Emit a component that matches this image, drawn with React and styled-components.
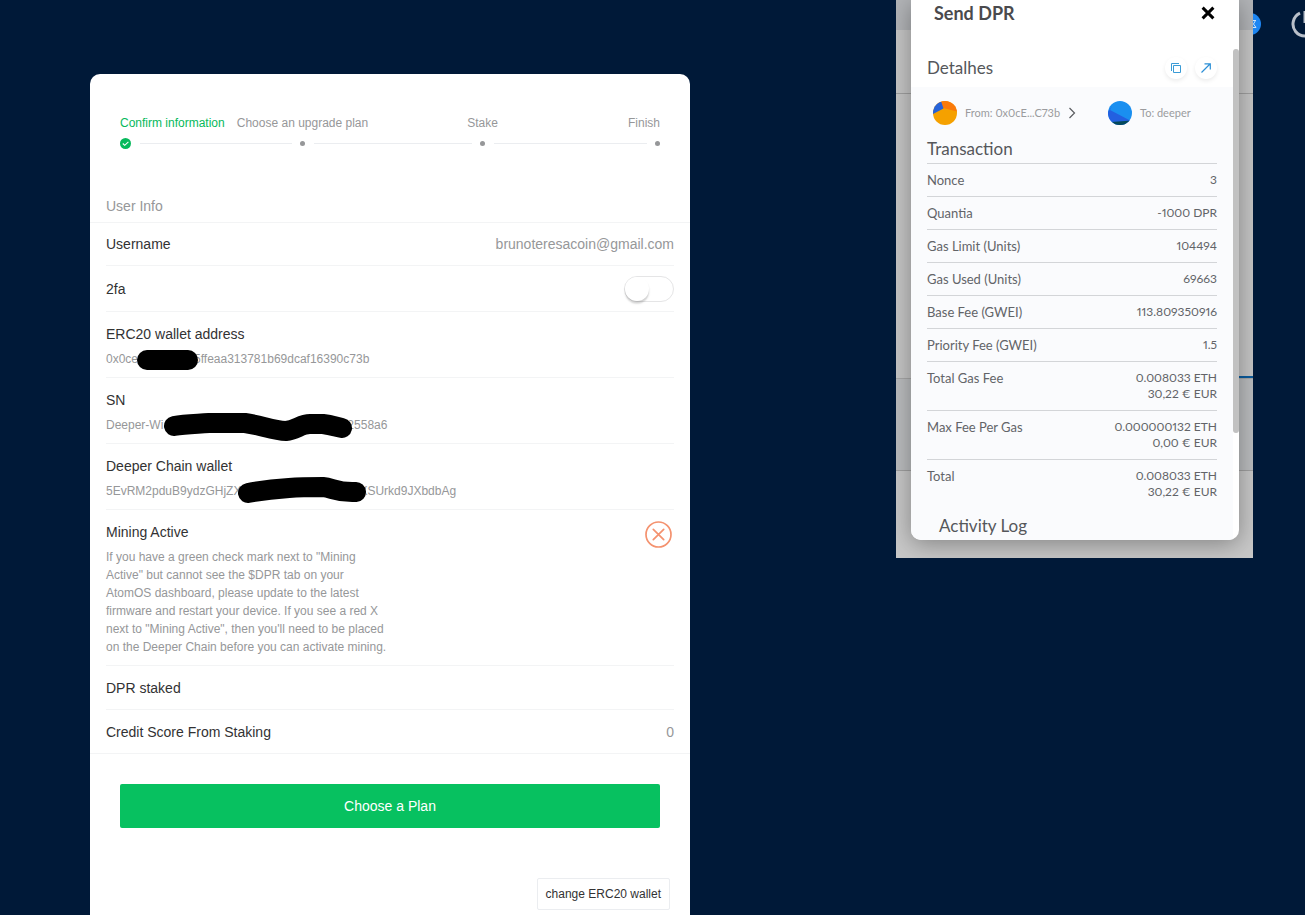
import React from "react";
import styled, { createGlobalStyle } from "styled-components";

const GlobalStyle = createGlobalStyle`
  *, *::before, *::after { box-sizing: border-box; }
  body {
    margin: 0;
    background: #001938;
    color: #323233;
    font-family: "Liberation Sans", Arial, sans-serif;
    font-size: 14px;
    line-height: 24px;
  }
  h2, h3, p, ol { margin: 0; padding: 0; font-weight: 400; }
  button { font-family: inherit; cursor: pointer; }
`;

const Page = styled.div`
  display: flex;
  min-height: 100vh;
  padding-left: 90px;
  overflow: hidden;
`;

const Card = styled.main`
  flex: 0 1 600px;
  margin-top: 74px;
  padding-bottom: 5px;
  background: #fff;
  border-radius: 10px 10px 0 0;
`;

const Steps = styled.ol`
  display: flex;
  padding: 40px 30px 32px;
  list-style: none;
  font-size: 12px;
  line-height: 18px;
`;

const Step = styled.li`
  flex: 1 1 0;
  color: ${(p) => (p.$done ? "#07b95c" : "#969799")};
  &:last-child {
    flex: 0 0 5px;
    margin-left: -5px;
  }
`;

const StepLabel = styled.div`
  display: flex;
  width: 5px;
  justify-content: ${(p) => p.$place};
  white-space: nowrap;
`;

const StepTrack = styled.div`
  display: flex;
  align-items: center;
  height: 13px;
  margin-top: 5px;
`;

const Dot = styled.span`
  flex: none;
  width: 5px;
  height: 5px;
  border-radius: 50%;
  background: #969799;
`;

const Line = styled.span`
  flex: 1;
  height: 1px;
  margin: 0 8px 0 9px;
  background: #ebedf0;
  ${Step}:nth-last-child(2) & { margin-right: 13px; }
`;

const GroupTitle = styled.h2`
  padding: 16px 16px 8px;
  color: #969799;
  font-size: 14px;
  line-height: 16px;
`;

const Group = styled.div`
  padding: 0 16px;
  box-shadow: inset 0 1px #f3f4f5, inset 0 -1px #f3f4f5;
`;

const Cell = styled.div`
  display: flex;
  justify-content: space-between;
  align-items: ${(p) => (p.$middle ? "center" : "flex-start")};
  padding: 10px 0;
  box-shadow: inset 0 -1px #f3f4f5;
`;

const CellValue = styled.span`
  color: #969799;
`;

const CellNote = styled.p`
  max-width: 284px;
  margin-top: 4px;
  color: #969799;
  font-size: 12px;
  line-height: 18px;
  white-space: ${(p) => (p.$wrap ? "normal" : "nowrap")};
`;

const Switch = styled.input`
  appearance: none;
  flex: none;
  width: 50px;
  height: 26px;
  margin: 0;
  border: 1px solid #e5e5e6;
  border-radius: 13px;
  background: #fff;
  cursor: pointer;
  &::before {
    content: "";
    display: block;
    width: 24px;
    height: 24px;
    border-radius: 50%;
    background: #fff;
    box-shadow: 0 3px 1px rgba(0, 0, 0, 0.05), 0 2px 2px rgba(0, 0, 0, 0.1), 0 3px 3px rgba(0, 0, 0, 0.05);
  }
  &:checked { background: #07c160; }
  &:checked::before { margin-left: 24px; }
`;

const Redacted = styled.span`
  display: inline-block;
  position: relative;
  width: ${(p) => p.$width}px;
  height: 12px;
  svg {
    position: absolute;
    left: 0;
    top: 0;
    overflow: visible;
    fill: none;
    stroke: #000;
    stroke-width: 20;
    stroke-linecap: round;
    stroke-linejoin: round;
  }
`;

const CloseMark = styled.svg`
  flex: none;
  margin: 1px 2px;
`;

const PrimaryButton = styled.button`
  display: block;
  width: calc(100% - 60px);
  height: 44px;
  margin: 30px 30px 50px;
  border: 0;
  border-radius: 2px;
  background: #07c160;
  color: #fff;
  font-size: 14px;
`;

const SmallButton = styled.button`
  display: block;
  height: 32px;
  margin: 0 20px 0 auto;
  padding: 0 8px;
  border: 1px solid #ebedf0;
  border-radius: 2px;
  background: #fff;
  color: #323233;
  font-size: 12px;
`;

const Wallet = styled.aside`
  position: relative;
  z-index: 1;
  flex: none;
  align-self: flex-start;
  display: grid;
  width: 357px;
  margin-left: auto;
  overflow: hidden;
  font-family: Lato, sans-serif;
  font-variant-numeric: proportional-nums;
  color: #626468;
`;

const Backdrop = styled.div`
  grid-area: 1 / 1;
  display: grid;
  grid-template-rows: 30px 64px 285px 92px 1fr;
`;

const Band = styled.div`
  background: ${(p) => p.$fill};
  border-bottom: ${(p) => (p.$rule ? `1px solid ${p.$rule}` : "0")};
`;

const ActiveTab = styled(Band)`
  display: flex;
  justify-content: flex-end;
  align-items: flex-end;
  &::after {
    content: "";
    width: 130px;
    height: 2px;
    background: #0b5c9e;
  }
`;

const Dialog = styled.section`
  grid-area: 1 / 1;
  z-index: 1;
  height: 540px;
  margin: 0 14px 18px 15px;
  overflow: hidden;
  border-radius: 0 0 10px 10px;
  background: #fff;
  box-shadow: 0 4px 24px rgba(0, 0, 0, 0.35);
`;

const DialogHeader = styled.header`
  display: flex;
  justify-content: space-between;
  align-items: center;
  height: 26px;
  margin-bottom: 23px;
  padding: 0 23px;
`;

const DialogTitle = styled.h2`
  color: #4a4a4d;
  font-size: 18px;
  font-weight: 700;
`;

const IconButton = styled.button`
  display: grid;
  place-items: center;
  width: ${(p) => (p.$round ? 22 : 16)}px;
  height: ${(p) => (p.$round ? 22 : 16)}px;
  padding: 0;
  border: 0;
  border-radius: 50%;
  background: #fff;
  box-shadow: ${(p) => (p.$round ? "0 2px 4px rgba(0, 0, 0, 0.08)" : "none")};
`;

const DialogBody = styled.div`
  display: flex;
  align-items: flex-start;
`;

const Scroller = styled.div`
  flex: 1;
`;

const Thumb = styled.div`
  flex: none;
  width: 6px;
  height: 384px;
  border-radius: 3px;
  background: #c1c1c1;
`;

const DetailsBar = styled.div`
  display: flex;
  align-items: center;
  justify-content: space-between;
  height: 38px;
  padding: 0 16px;
`;

const Actions = styled.div`
  display: flex;
  gap: 8px;
`;

const Heading = styled.h3`
  color: #55575b;
  font-size: 17px;
  line-height: 24px;
`;

const Details = styled.div`
  padding: 0 16px;
  background: #fafbfd;
`;

const Parties = styled.div`
  display: flex;
  align-items: center;
  height: 52px;
  color: #9b9b9e;
  padding-left: 6px;
  font-size: 11px;
`;

const Party = styled.span`
  display: flex;
  align-items: center;
  gap: 8px;
  width: ${(p) => (p.$from ? "130px" : "auto")};
  white-space: nowrap;
`;

const Chevron = styled.svg`
  flex: none;
  margin: 0 32px 0 5px;
`;

const FeeTable = styled.table`
  width: 100%;
  border-spacing: 0;
  font-size: 13px;
  line-height: 16px;
  caption {
    height: 24px;
    color: #55575b;
    font-size: 17px;
    line-height: 20px;
    text-align: left;
  }
  th, td {
    padding: 8px 0;
    border-top: 1px solid #d3d5d8;
    font-weight: 400;
    text-align: left;
    vertical-align: top;
  }
  td {
    font-size: 12px;
    text-align: right;
  }
`;

const Log = styled.div`
  padding: 6px 12px 8px;
`;

const Rail = styled.nav`
  display: flex;
  align-items: center;
  flex: 0 0 52px;
  min-width: 0;
  width: 52px;
  height: 48px;
  gap: 30px;
  svg { flex: none; }
  svg:first-child { margin-left: -14px; }
`;

const steps = [
  { label: "Confirm information", place: "flex-start", done: true },
  { label: "Choose an upgrade plan", place: "center" },
  { label: "Stake", place: "center" },
  { label: "Finish", place: "flex-end" },
];

const fees = [
  ["Nonce", "3"],
  ["Quantia", "-1000 DPR"],
  ["Gas Limit (Units)", "104494"],
  ["Gas Used (Units)", "69663"],
  ["Base Fee (GWEI)", "113.809350916"],
  ["Priority Fee (GWEI)", "1.5"],
  ["Total Gas Fee", "0.008033 ETH", "30,22 € EUR"],
  ["Max Fee Per Gas", "0.000000132 ETH", "0,00 € EUR"],
  ["Total", "0.008033 ETH", "30,22 € EUR"],
];

function Marker({ width, d }) {
  return (
    <Redacted $width={width}>
      <svg width={width} height="12" aria-hidden="true"><path d={d} /></svg>
    </Redacted>
  );
}

function Progress() {
  return (
    <Steps>
      {steps.map((s, i) => (
        <Step key={s.label} $done={s.done}>
          <StepLabel $place={s.place}>{s.label}</StepLabel>
          <StepTrack>
            {s.done ? (
              <svg width="11" height="11" viewBox="0 0 11 11" aria-hidden="true">
                <circle cx="5.5" cy="5.5" r="5.5" fill="#07b95c" />
                <path d="M2.8 5.5 4.7 7.3 8.4 3.9" fill="none" stroke="#fff" strokeWidth="1.1" />
              </svg>
            ) : (
              <Dot />
            )}
            {i < steps.length - 1 && <Line />}
          </StepTrack>
        </Step>
      ))}
    </Steps>
  );
}

function AccountCard() {
  return (
    <Card>
      <Progress />
      <GroupTitle>User Info</GroupTitle>
      <Group>
        <Cell>
          <span>Username</span>
          <CellValue>brunoteresacoin@gmail.com</CellValue>
        </Cell>
        <Cell $middle>
          <label htmlFor="twofa">2fa</label>
          <Switch id="twofa" type="checkbox" role="switch" />
        </Cell>
        <Cell>
          <div>
            ERC20 wallet address
            <CellNote>
              0x0ce<Marker width={56} d="M9 9H50" />5ffeaa313781b69dcaf16390c73b
            </CellNote>
          </div>
        </Cell>
        <Cell>
          <div>
            SN
            <CellNote>
              Deeper-Wi<Marker width={184} d="M11 9C22 7 32 7 46 6H82C98 8 110 14 123 14C133 13 138 7 147 7H160C168 8 174 10 179 11" />2558a6
            </CellNote>
          </div>
        </Cell>
        <Cell>
          <div>
            Deeper Chain wallet
            <CellNote>
              5EvRM2pduB9ydzGHjZX<Marker width={118} d="M7 10C18 8 34 6 48 5C60 4 72 4 82 4C92 5 96 10 115 9" />XSUrkd9JXbdbAg
            </CellNote>
          </div>
        </Cell>
        <Cell>
          <div>
            Mining Active
            <CellNote $wrap>
              If you have a green check mark next to "Mining Active" but cannot see the $DPR tab on your
              AtomOS dashboard, please update to the latest firmware and restart your device. If you see a
              red X next to "Mining Active", then you'll need to be placed on the Deeper Chain before you
              can activate mining.
            </CellNote>
          </div>
          <CloseMark width="27" height="27" viewBox="0 0 27 27" fill="none" stroke="#f4926f" role="img" aria-label="Inactive">
            <circle cx="13.5" cy="13.5" r="12.5" strokeWidth="1.7" />
            <path d="M8.3 8.3 18.7 18.7M18.7 8.3 8.3 18.7" strokeWidth="1.7" strokeLinecap="round" />
          </CloseMark>
        </Cell>
        <Cell><span>DPR staked</span></Cell>
        <Cell>
          <span>Credit Score From Staking</span>
          <CellValue>0</CellValue>
        </Cell>
      </Group>
      <PrimaryButton>Choose a Plan</PrimaryButton>
      <SmallButton>change ERC20 wallet</SmallButton>
    </Card>
  );
}

function WalletWindow() {
  return (
    <Wallet>
      <Backdrop>
        <Band $fill="#b2b4b7" />
        <Band $fill="#c6c6c6" $rule="#a0a0a0" />
        <ActiveTab $fill="#c6c6c6" $rule="#a8a8a8" />
        <Band $fill="#bbbdbf" $rule="#a0a0a0" />
        <Band $fill="#c8c8c8" />
      </Backdrop>
      <Dialog>
        <DialogHeader>
          <DialogTitle>Send DPR</DialogTitle>
          <IconButton aria-label="Close">
            <svg width="14" height="14" viewBox="0 0 14 14" stroke="#000" strokeWidth="3">
              <path d="M1.6 1.6 12.4 12.4M12.4 1.6 1.6 12.4" />
            </svg>
          </IconButton>
        </DialogHeader>
        <DialogBody>
          <Scroller>
            <DetailsBar>
              <Heading>Detalhes</Heading>
              <Actions>
                <IconButton $round aria-label="Copy">
                  <svg width="12" height="12" viewBox="0 0 12 12" fill="none" stroke="#3a9bd6">
                    <path d="M3.5 3.5H10.5V10.5H3.5ZM1.5 9V1.5H9" />
                  </svg>
                </IconButton>
                <IconButton $round aria-label="Open in explorer">
                  <svg width="12" height="12" viewBox="0 0 12 12" fill="none" stroke="#2b8fd6" strokeWidth="1.2">
                    <path d="M1.5 10.5 10 2M4.5 1.8H10.3V7.5" />
                  </svg>
                </IconButton>
              </Actions>
            </DetailsBar>
            <Details>
              <Parties>
                <Party $from>
                  <svg width="24" height="24" viewBox="0 0 24 24" aria-hidden="true">
                    <clipPath id="from"><circle cx="12" cy="12" r="12" /></clipPath>
                    <g clipPath="url(#from)">
                      <rect width="24" height="24" fill="#f5a100" />
                      <path d="M0 0H24V10.5L10 7Z" fill="#fa7a0a" />
                      <path d="M0 0H8L10.5 7.5 0 13Z" fill="#2663d9" />
                    </g>
                  </svg>
                  From: 0x0cE...C73b
                </Party>
                <Chevron width="8" height="12" viewBox="0 0 8 12" fill="none" stroke="#5a5c60" strokeWidth="1.2">
                  <path d="M1.5 1 6.5 6 1.5 11" />
                </Chevron>
                <Party>
                  <svg width="24" height="24" viewBox="0 0 24 24" aria-hidden="true">
                    <clipPath id="to"><circle cx="12" cy="12" r="12" /></clipPath>
                    <g clipPath="url(#to)">
                      <rect width="24" height="24" fill="#1a8ff0" />
                      <path d="M4 5 0 11V24H24V20.5L2 9Z" fill="#2360e0" />
                      <path d="M3 21 24 19.5V24H3Z" fill="#05495a" />
                    </g>
                  </svg>
                  To: deeper
                </Party>
              </Parties>
              <FeeTable>
                <caption>Transaction</caption>
                <tbody>
                  {fees.map(([name, amount, fiat]) => (
                    <tr key={name}>
                      <th scope="row">{name}</th>
                      <td>{amount}{fiat && <><br />{fiat}</>}</td>
                    </tr>
                  ))}
                </tbody>
              </FeeTable>
              <Log><Heading>Activity Log</Heading></Log>
            </Details>
          </Scroller>
          <Thumb />
        </DialogBody>
      </Dialog>
    </Wallet>
  );
}

export default function App() {
  return (
    <>
      <GlobalStyle />
      <Page>
        <AccountCard />
        <WalletWindow />
        <Rail aria-label="Account">
          <svg width="22" height="22" viewBox="0 0 22 22" aria-hidden="true">
            <circle cx="11" cy="11" r="11" fill="#1e86f2" />
            <path d="M10 7.5H17M16.5 7.5 14.5 11 17 14.5H12" fill="none" stroke="#cfe4fb" />
          </svg>
          <svg width="28" height="28" viewBox="0 0 28 28" fill="none" stroke="#b9c0ca" strokeWidth="3" aria-hidden="true">
            <path d="M9 3.2A12 12 0 1 0 19 3.2M14 1V13" />
          </svg>
        </Rail>
      </Page>
    </>
  );
}
